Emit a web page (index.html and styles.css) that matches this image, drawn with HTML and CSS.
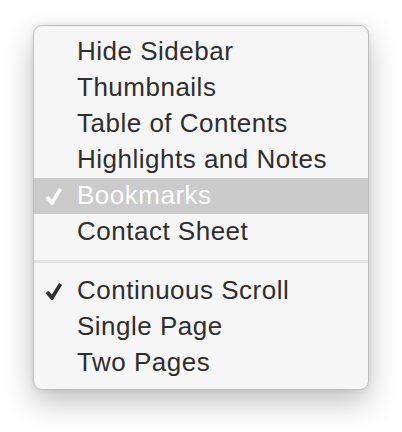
FILE: index.html
```html
<!DOCTYPE html>
<html lang="en">
<head>
  <meta charset="UTF-8" />
  <title>View Menu</title>
  <link rel="stylesheet" href="styles.css">
</head>
<body>
  <div class="menu">
    <div class="item">Hide Sidebar</div>
    <div class="item">Thumbnails</div>
    <div class="item">Table of Contents</div>
    <div class="item">Highlights and Notes</div>
    <div class="item selected">
      <svg class="check" viewBox="0 0 18 18"><path d="M2 10 L7 16 L15.5 2"/></svg>
      Bookmarks
    </div>
    <div class="item">Contact Sheet</div>
    <div class="separator"></div>
    <div class="item">
      <svg class="check" viewBox="0 0 18 18"><path d="M2 10 L7 16 L15.5 2"/></svg>
      Continuous Scroll
    </div>
    <div class="item">Single Page</div>
    <div class="item">Two Pages</div>
  </div>
</body>
</html>
```

FILE: styles.css
```css
body {
  margin: 0;
  padding-bottom: 40px;
  background: #fff;
  font-family: 'Liberation Sans', Arial, sans-serif;
}

.menu {
  margin: 25px 0 0 33px;
  width: 334px;
  padding: 8px 0;
  background: #f6f6f6;
  border: 1px solid #bdbdbd;
  border-radius: 9px;
  box-shadow: 0 12px 30px rgba(0, 0, 0, 0.25), 0 0 6px rgba(0, 0, 0, 0.08);
}

.item {
  position: relative;
  height: 36px;
  line-height: 35px;
  padding-left: 43px;
  font-size: 26px;
  letter-spacing: 0.5px;
  color: #2e2e2e;
}

.check {
  position: absolute;
  left: 11px;
  top: 9px;
  width: 18px;
  height: 18px;
  fill: none;
  stroke: currentColor;
  stroke-width: 3.6;
  stroke-linejoin: miter;
}

.item.selected {
  background: #cbcbcb;
  color: #fff;
}

.separator {
  height: 3px;
  margin: 10px 0 10px;
  background: #e3e3e3;
}
```
